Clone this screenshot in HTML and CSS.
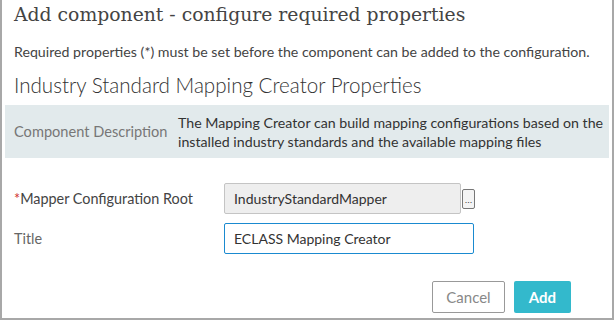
FILE: index.html
```html
<!DOCTYPE html>
<html lang="en">
<head>
  <meta charset="UTF-8" />
  <title>Add component</title>
  <link rel="stylesheet" href="styles.css">
</head>
<body>
  <div class="dialog">
    <h1 class="dialog-title">Add component - configure required properties</h1>
    <p class="hint">Required properties (*) must be set before the component can be added to the configuration.</p>
    <h2 class="section-title">Industry Standard Mapping Creator Properties</h2>

    <div class="desc">
      <div class="desc-label">Component Description</div>
      <div class="desc-text">The Mapping Creator can build mapping configurations based on the installed industry standards and the available mapping files</div>
    </div>

    <div class="form">
      <div class="row">
        <label class="label"><span class="req">*</span>Mapper Configuration Root</label>
        <div class="field">
          <input class="input readonly" type="text" value="IndustryStandardMapper" readonly />
          <button class="browse">...</button>
        </div>
      </div>
      <div class="row">
        <label class="label label-light">Title</label>
        <div class="field">
          <input class="input active" type="text" value="ECLASS Mapping Creator" />
        </div>
      </div>
    </div>

    <div class="actions">
      <button class="btn btn-cancel">Cancel</button>
      <button class="btn btn-add">Add</button>
    </div>
  </div>
</body>
</html>
```

FILE: styles.css
```css
html, body {
  margin: 0;
  padding: 0;
  background: #ffffff;
}
body {
  font-family: 'Lato', sans-serif;
  color: #333333;
}
.dialog {
  width: 614px;
  height: 320px;
  box-sizing: border-box;
  border: 2px solid #a8a8a8;
  border-top: none;
  padding: 0 3px 0 3px;
  position: relative;
}
.dialog-title {
  margin: 0;
  padding: 2px 0 0 9px;
  font-family: 'DejaVu Serif', serif;
  font-weight: normal;
  font-size: 18.8px;
  line-height: 26px;
  color: #444444;
}
.hint {
  margin: 0;
  padding: 15px 0 0 9px;
  font-size: 14.2px;
  line-height: 18px;
  color: #444444;
}
.section-title {
  margin: 0;
  padding: 11px 0 0 9px;
  font-weight: 300;
  font-size: 20.6px;
  line-height: 26px;
  color: #333333;
}
.desc {
  margin-top: 7px;
  height: 53px;
  background: #e2eaec;
  display: flex;
  align-items: center;
}
.desc-label {
  width: 164px;
  padding-left: 9px;
  white-space: nowrap;
  font-size: 14.6px;
  color: #777777;
}
.desc-text {
  flex: 1;
  font-size: 14.2px;
  line-height: 19px;
  color: #333333;
}
.form {
  margin-top: 25px;
  display: flex;
  flex-direction: column;
  gap: 9px;
}
.row {
  display: flex;
  align-items: center;
}
.label {
  width: 210px;
  padding-left: 9px;
  font-size: 14.4px;
  color: #444444;
}
.label-light {
  color: #666666;
}
.req {
  color: #d0312d;
}
.field {
  display: flex;
  align-items: center;
}
.input {
  box-sizing: border-box;
  height: 31px;
  padding: 0 9px;
  font-family: 'Lato', sans-serif;
  font-size: 14px;
  color: #333333;
  border-radius: 2px;
  outline: none;
}
.readonly {
  width: 237px;
  background: #eeeeee;
  border: 1px solid #c4c4c4;
}
.active {
  width: 250px;
  background: #ffffff;
  border: 1px solid #1a8ad0;
}
.browse {
  width: 13px;
  height: 20px;
  margin-left: 1px;
  padding: 0;
  font-size: 9px;
  line-height: 20px;
  background: #f4f4f4;
  border: 1px solid #777777;
  border-radius: 2px;
  color: #333333;
}
.actions {
  position: absolute;
  right: 41px;
  bottom: 5px;
  display: flex;
  gap: 9px;
}
.btn {
  height: 32px;
  font-family: 'Lato', sans-serif;
  font-size: 15px;
  border-radius: 2px;
  cursor: pointer;
}
.btn-cancel {
  width: 73px;
  background: #ffffff;
  border: 1px solid #999999;
  color: #888888;
}
.btn-add {
  width: 57px;
  background: #33b9cc;
  border: none;
  color: #ffffff;
  font-weight: bold;
}
```
